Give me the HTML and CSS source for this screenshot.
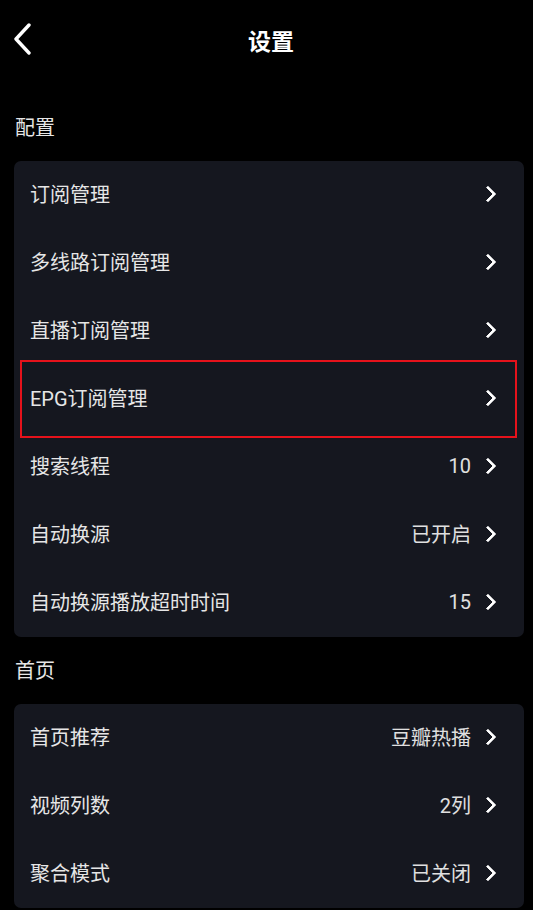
FILE: index.html
```html
<!DOCTYPE html>
<html lang="zh-CN">
<head>
    <meta charset="UTF-8">
    <meta name="viewport" content="width=device-width, initial-scale=1.0">
    <title>设置</title>
    <link rel="stylesheet" href="styles.css">
</head>
<body>

    <header class="topbar">
        <a class="back" href="#">
            <svg width="20" height="32" viewBox="0 0 20 32"><path d="M16 2 L3 16 L16 30" fill="none" stroke="#fff" stroke-width="3.4" stroke-linecap="round" stroke-linejoin="round"/></svg>
        </a>
        <h1 class="title">设置</h1>
    </header>

    <h2 class="section-title">配置</h2>
    <ul class="card">
        <li class="row"><span class="label">订阅管理</span><span class="arrow"></span></li>
        <li class="row"><span class="label">多线路订阅管理</span><span class="arrow"></span></li>
        <li class="row"><span class="label">直播订阅管理</span><span class="arrow"></span></li>
        <li class="row focused"><span class="label">EPG订阅管理</span><span class="arrow"></span></li>
        <li class="row"><span class="label">搜索线程</span><span class="value">10</span><span class="arrow"></span></li>
        <li class="row"><span class="label">自动换源</span><span class="value">已开启</span><span class="arrow"></span></li>
        <li class="row"><span class="label">自动换源播放超时时间</span><span class="value">15</span><span class="arrow"></span></li>
    </ul>

    <h2 class="section-title">首页</h2>
    <ul class="card">
        <li class="row"><span class="label">首页推荐</span><span class="value">豆瓣热播</span><span class="arrow"></span></li>
        <li class="row"><span class="label">视频列数</span><span class="value">2列</span><span class="arrow"></span></li>
        <li class="row"><span class="label">聚合模式</span><span class="value">已关闭</span><span class="arrow"></span></li>
    </ul>

</body>
</html>
```

FILE: styles.css
```css
body {
    margin: 0;
    padding: 0 9px 0 14px;
    background: #000;
    color: #e6e6e6;
    font-family: Roboto, "Noto Sans CJK SC", sans-serif;
}

.topbar {
    position: relative;
    height: 79px;
    display: flex;
    align-items: center;
    justify-content: center;
    margin-bottom: 36px;
}

.back {
    position: absolute;
    left: -1px;
    top: 23px;
    display: block;
    line-height: 0;
}

.title {
    margin: 0;
    font-size: 23px;
    font-weight: bold;
    color: #fff;
    padding-left: 4px;
}

.section-title {
    margin: 21px 0 18px 1px;
    font-size: 20px;
    font-weight: normal;
    line-height: 26px;
    padding-bottom: 2px;
    color: #e6e6e6;
}

.card {
    list-style: none;
    margin: 0;
    padding: 0;
    background: #15171f;
    border-radius: 7px;
}

.row {
    position: relative;
    height: 68px;
    box-sizing: border-box;
    display: flex;
    align-items: center;
    padding: 0 27px 3px 16px;
    font-size: 20px;
}

.label {
    flex: 1;
}

.value {
    color: #e0e0e0;
    margin-right: 11px;
}

/* small white chevron on the right of each row */
.arrow {
    width: 9px;
    height: 9px;
    border-top: 3px solid #fff;
    border-right: 3px solid #fff;
    transform: rotate(45deg);
    margin-right: 3px;
    border-radius: 1px;
}

.focused::after {
    content: "";
    position: absolute;
    top: -5px;
    bottom: -5px;
    left: 6px;
    right: 7px;
    border: 2px solid #e5121b;
}
```
